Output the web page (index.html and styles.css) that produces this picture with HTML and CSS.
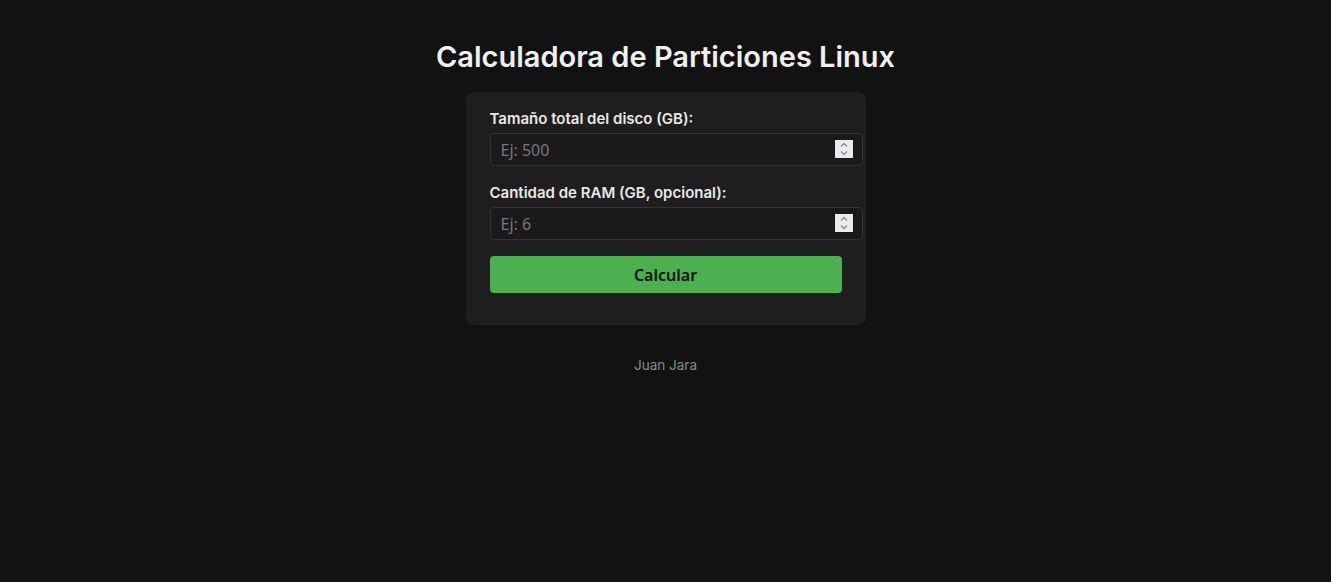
FILE: index.html
```html
<!DOCTYPE html>
<html lang="es">
<head>
<meta charset="utf-8">
<title>Calculadora de Particiones Linux</title>
<link rel="stylesheet" href="styles.css">
</head>
<body>
<main class="page">
  <h1 class="title">Calculadora de Particiones Linux</h1>
  <form class="card">
    <label class="label" for="disk">Tamaño total del disco (GB):</label>
    <div class="field-wrap">
      <input class="field" id="disk" type="number" placeholder="Ej: 500">
      <span class="spin"><svg width="18" height="18" viewBox="0 0 18 18"><path d="M6 6.5 L9 3.5 L12 6.5" fill="none" stroke="#8a8a90" stroke-width="1.3"/><path d="M6 11.5 L9 14.5 L12 11.5" fill="none" stroke="#8a8a90" stroke-width="1.3"/></svg></span>
    </div>
    <label class="label" for="ram">Cantidad de RAM (GB, opcional):</label>
    <div class="field-wrap">
      <input class="field" id="ram" type="number" placeholder="Ej: 6">
      <span class="spin"><svg width="18" height="18" viewBox="0 0 18 18"><path d="M6 6.5 L9 3.5 L12 6.5" fill="none" stroke="#8a8a90" stroke-width="1.3"/><path d="M6 11.5 L9 14.5 L12 11.5" fill="none" stroke="#8a8a90" stroke-width="1.3"/></svg></span>
    </div>
    <button class="btn" type="button">Calcular</button>
  </form>
  <footer class="footer">Juan Jara</footer>
</main>
</body>
</html>
```
FILE: styles.css
```css
html, body {
  margin: 0;
  padding: 0;
  background: #121212;
}
body {
  font-family: Inter, "Noto Sans", sans-serif;
  color: #e8e8e8;
}
.page {
  display: flex;
  flex-direction: column;
  align-items: center;
  padding-top: 38px;
}
.title {
  margin: 0 0 17px;
  font-size: 29px;
  line-height: 37px;
  font-weight: 600;
  color: #f0f0f0;
}
.card {
  width: 352px;
  background: #1e1e1e;
  border-radius: 8px;
  padding: 18px 24px 32px;
  display: flex;
  flex-direction: column;
  align-items: flex-start;
}
.label {
  font-size: 15px;
  line-height: 18px;
  font-weight: 600;
  color: #e8e8e8;
  margin-bottom: 5px;
}
.field-wrap {
  position: relative;
  width: calc(100% + 21px);
  margin-bottom: 18px;
}
.field {
  display: block;
  width: 100%;
  box-sizing: border-box;
  height: 33px;
  padding: 6px 10px;
  margin: 0;
  background: #1a1a1a;
  border: 1px solid #333;
  border-radius: 4px;
  color: #ddd;
  font-family: "Noto Sans", sans-serif;
  font-size: 16px;
}
.field::-webkit-inner-spin-button,
.field::-webkit-outer-spin-button {
  -webkit-appearance: none;
  margin: 0;
}
.field::placeholder {
  color: #777;
}
.spin {
  position: absolute;
  top: 7px;
  right: 10px;
  width: 18px;
  height: 18px;
  background: #e9e9ee;
  display: flex;
}
.btn {
  width: 100%;
  height: 37px;
  margin-top: -2px;
  background: #4caf50;
  border: none;
  border-radius: 4px;
  color: #111;
  font-family: "Noto Sans", sans-serif;
  font-size: 16px;
  font-weight: 600;
}
.footer {
  margin-top: 32px;
  font-size: 13.5px;
  color: #888;
}
```
